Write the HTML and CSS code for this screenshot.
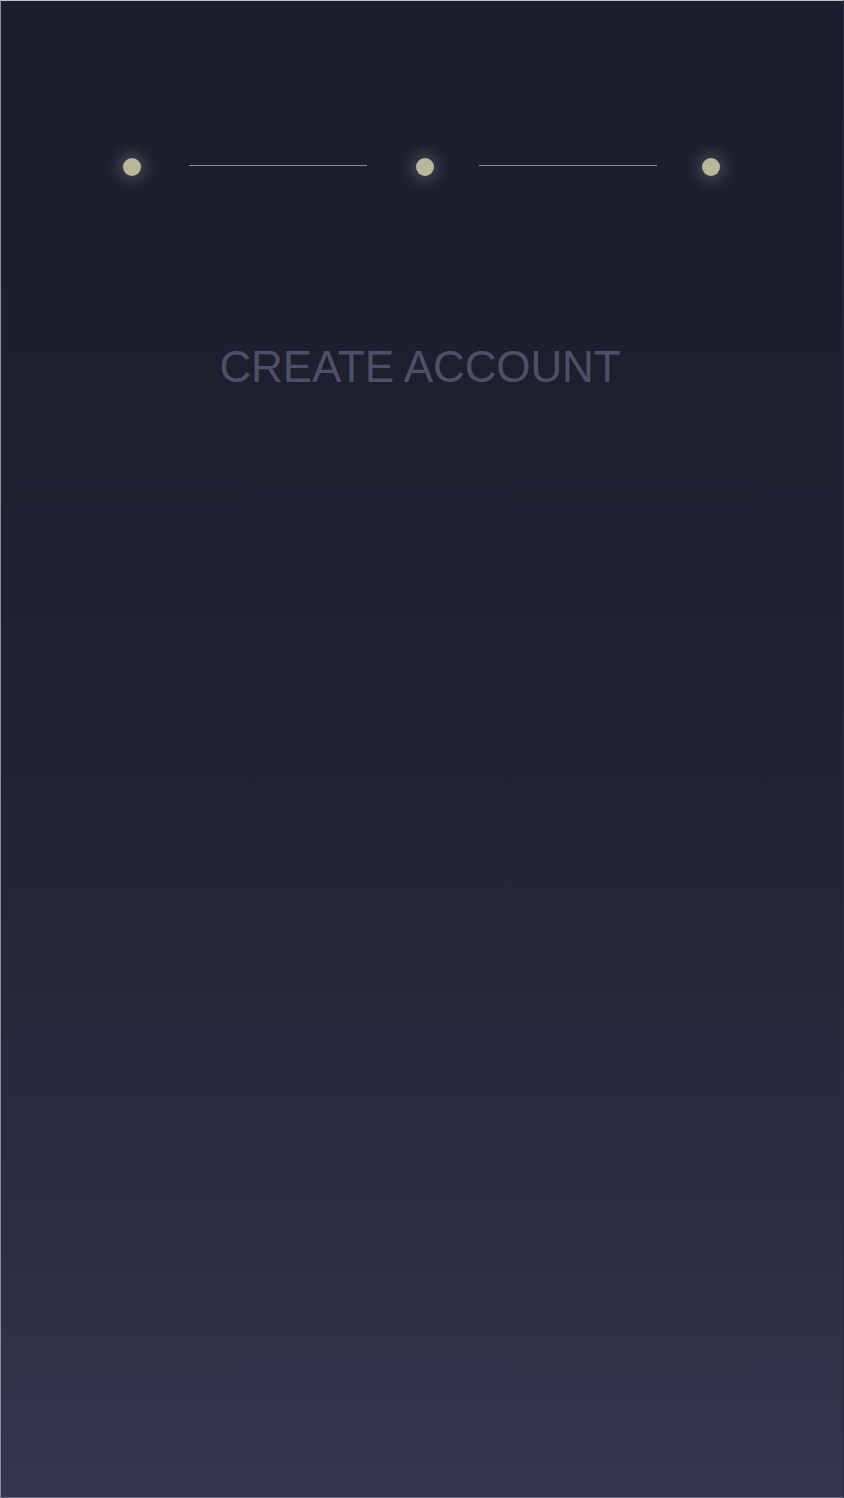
FILE: index.html
```html
<!DOCTYPE html>
<html lang="en">
<head>
<meta charset="utf-8">
<title>Create Account</title>
<link rel="stylesheet" href="styles.css">
</head>
<body>
<main class="screen">
  <div class="stepper">
    <span class="dot"></span>
    <span class="line line-first"></span>
    <span class="dot"></span>
    <span class="line line-second"></span>
    <span class="dot"></span>
  </div>
  <h1 class="title">CREATE ACCOUNT</h1>
</main>
</body>
</html>
```
FILE: styles.css
```css
html, body {
  margin: 0;
  padding: 0;
  background: #c9c9cf;
}
.screen {
  box-sizing: border-box;
  height: 1498px;
  border: 1px solid #2a2b3c;
  border-top-color: #c4c4ca;
  border-left-color: #8d8d96;
  border-bottom-color: #6e6f86;
  background: linear-gradient(180deg, #1d1e2d 0%, #1e1f2f 30%, #222437 55%, #2a2c42 80%, #343552 100%);
  display: flex;
  flex-direction: column;
  align-items: center;
  padding-top: 157px;
}
.stepper {
  display: flex;
  align-items: center;
  height: 18px;
  margin-right: 2px;
}
.dot {
  width: 18px;
  height: 18px;
  border-radius: 50%;
  background: #b8b79c;
  box-shadow: 0 0 14px 6px rgba(215, 215, 232, 0.18);
}
.line {
  width: 178px;
  height: 1px;
  background: #8a8b93;
  margin-top: -3px;
}
.line-first {
  margin-left: 48px;
  margin-right: 49px;
}
.line-second {
  margin-left: 45px;
  margin-right: 45px;
}
.title {
  margin: 169px 4px 0 0;
  font-family: "Liberation Sans", Arial, sans-serif;
  font-weight: 400;
  font-size: 44px;
  line-height: 1;
  letter-spacing: -0.1px;
  color: #4e5067;
}
```
